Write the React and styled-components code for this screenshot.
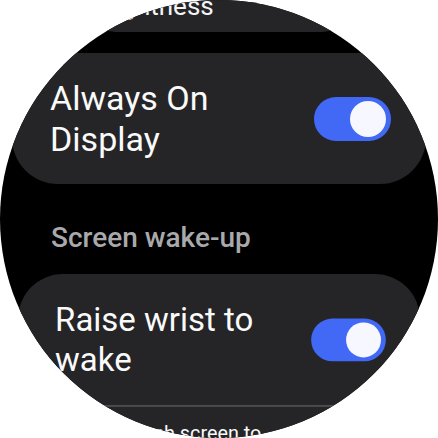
import React from 'react'
import styled, { createGlobalStyle } from 'styled-components'

const GlobalStyle = createGlobalStyle`
  html, body {
    margin: 0;
    padding: 0;
    background: #ffffff;
  }
  * {
    box-sizing: border-box;
  }
`

const Screen = styled.div`
  width: 438px;
  height: 438px;
  border-radius: 50%;
  overflow: hidden;
  background: #000000;
  font-family: Roboto, "Liberation Sans", sans-serif;
`

const List = styled.div`
  display: flex;
  flex-direction: column;
  margin-top: -40px;
  padding: 0 12px;
`

const Chip = styled.div`
  align-self: center;
  display: flex;
  align-items: flex-end;
  width: 278px;
  height: 72px;
  margin-bottom: 21px;
  padding: 0 0 11px 10px;
  border-radius: 36px;
  background: #252528;
  color: #f4f4f6;
  font-size: 26px;
  line-height: 30px;
`

const Card = styled.div`
  border-radius: 46px;
  background: #252528;
  overflow: hidden;
  transform: scale(${p => p.$scale || 1});
  transform-origin: 50% 0;
`

const Row = styled.div`
  display: flex;
  align-items: center;
  justify-content: space-between;
  gap: 14px;
  height: ${p => p.$height || 131}px;
  padding: 0 35px 0 38px;
  transform: scale(${p => p.$scale || 1});
  transform-origin: 50% 0;
`

const Label = styled.div`
  flex: 1;
  color: #fafafa;
  font-size: 34px;
  line-height: 41px;
`

const Switch = styled.div`
  flex: none;
  display: flex;
  align-items: center;
  justify-content: ${p => (p.$on ? 'flex-end' : 'flex-start')};
  width: 77px;
  height: 44px;
  padding: 0 5px;
  border-radius: 22px;
  background: ${p => (p.$on ? '#4169f6' : '#5a5a5e')};
`

const Knob = styled.span`
  width: 36px;
  height: 36px;
  border-radius: 50%;
  background: #f7f8ff;
`

const Divider = styled.div`
  height: 2px;
  margin: 0 24px;
  background: #4b4b4e;
`

const Header = styled.div`
  margin: 37px 0 20px;
  padding-left: 39px;
  color: #a9a9ab;
  font-size: 28px;
  font-weight: 500;
  line-height: 33px;
`

const Toggle = ({ on }) => (
  <Switch $on={on}>
    <Knob />
  </Switch>
)

const App = () => {
  return (
    <>
      <GlobalStyle />
      <Screen>
        <List>
          <Chip>Brightness</Chip>
          <Card>
            <Row>
              <Label>Always On Display</Label>
              <Toggle on />
            </Row>
          </Card>
          <Header>Screen wake-up</Header>
          <Card $scale={0.97}>
            <Row $height={135}>
              <Label>Raise wrist to wake</Label>
              <Toggle on />
            </Row>
            <Divider />
            <Row $scale={0.6}>
              <Label>Touch screen to wake</Label>
              <Toggle on />
            </Row>
          </Card>
        </List>
      </Screen>
    </>
  )
}

export default App
